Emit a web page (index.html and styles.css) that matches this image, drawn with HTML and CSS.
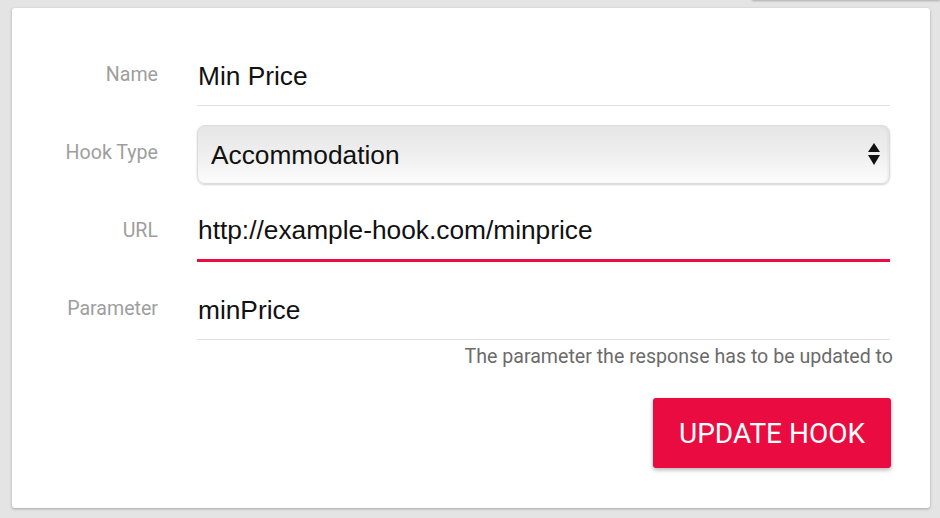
FILE: index.html
```html
<!DOCTYPE html>
<html>
<head>
	<meta charset="utf-8">
	<title>Edit hook</title>
	<link rel="stylesheet" href="styles.css">
</head>

<body>
	<div class="shelf"></div>

	<form class="card">
		<div class="form-grid">
			<label class="label" for="name">Name</label>
			<input class="field" id="name" type="text" value="Min Price">

			<label class="label" for="type">Hook Type</label>
			<div class="select-wrap">
				<select class="select" id="type">
					<option>Accommodation</option>
					<option>Flight</option>
					<option>Car Rental</option>
				</select>
				<svg class="select-arrows" width="12" height="22" viewBox="0 0 12 22">
					<path d="M6 0 L12 9 L0 9 Z" fill="#111"/>
					<path d="M0 12 L12 12 L6 22 Z" fill="#111"/>
				</svg>
			</div>

			<label class="label" for="url">URL</label>
			<input class="field active" id="url" type="text" value="http://example-hook.com/minprice">

			<label class="label" for="param">Parameter</label>
			<div class="field-group">
				<input class="field" id="param" type="text" value="minPrice">
				<p class="hint">The parameter the response has to be updated to</p>
			</div>
		</div>

		<div class="actions">
			<button class="btn" type="button">Update Hook</button>
		</div>
	</form>
</body>
</html>
```

FILE: styles.css
```css
body, html {
	height: 100%;
}

body {
	margin: 0;
	padding: 0;
	background: #e4e4e4;
	position: relative;
	overflow: hidden;
	font-family: Roboto, "Liberation Sans", sans-serif;
}

/* bottom edge of the panel above, only its shadow shows */
.shelf {
	position: absolute;
	top: -20px;
	right: 0;
	width: 188px;
	height: 20px;
	background: #e4e4e4;
	box-shadow: 0 1px 2px rgba(0, 0, 0, 0.25);
}

.card {
	box-sizing: border-box;
	display: block;
	width: 918px;
	height: 500px;
	margin: 8px 0 0 12px;
	padding: 39px 40px 0 20px;
	background: #fff;
	border-radius: 3px;
	box-shadow: 0 1px 3px rgba(0, 0, 0, 0.28);
}

.form-grid {
	display: grid;
	grid-template-columns: 126px 1fr;
	column-gap: 39px;
	row-gap: 19px;
	align-items: start;
}

.label {
	display: block;
	padding-top: 16px;
	text-align: right;
	font-size: 19.6px;
	line-height: 23px;
	color: #9e9e9e;
}

.field {
	box-sizing: border-box;
	display: block;
	width: 100%;
	height: 59px;
	margin: 0;
	padding: 15px 0 14px 1px;
	border: 0;
	border-bottom: 1px solid #e2e2e2;
	outline: none;
	background: transparent;
	font-family: "Liberation Sans", Arial, sans-serif;
	font-size: 26.3px;
	color: #111;
}

.field.active {
	padding-bottom: 14px;
	padding-top: 13px;
	border-bottom: 3px solid #ea0d41;
}

.select-wrap {
	position: relative;
	height: 59px;
}

.select {
	-webkit-appearance: none;
	appearance: none;
	box-sizing: border-box;
	display: block;
	width: 100%;
	height: 59px;
	margin: 0;
	padding: 0 40px 0 13px;
	border: 1px solid #dcdcdc;
	border-radius: 8px;
	outline: none;
	background: linear-gradient(#e6e6e6, #efefef 50%, #fcfcfc);
	box-shadow: 0 1px 2px rgba(0, 0, 0, 0.18), inset -2px 0 2px rgba(0, 0, 0, 0.04);
	font-family: "Liberation Sans", Arial, sans-serif;
	font-size: 26.3px;
	color: #111;
}

.select-arrows {
	position: absolute;
	top: 18px;
	right: 10px;
	pointer-events: none;
}

.hint {
	margin: 5px -3px 0 0;
	text-align: right;
	font-size: 19.6px;
	line-height: 23px;
	color: #6b6b6b;
}

.actions {
	display: flex;
	justify-content: flex-end;
	margin: 30px -1px 0 0;
}

.btn {
	width: 238px;
	height: 70px;
	border: 0;
	border-radius: 3px;
	background: #ea0c40;
	color: #fff;
	font-family: Roboto, sans-serif;
	font-size: 28px;
	text-transform: uppercase;
	box-shadow: 0 2px 4px rgba(0, 0, 0, 0.3);
	cursor: pointer;
}
```
